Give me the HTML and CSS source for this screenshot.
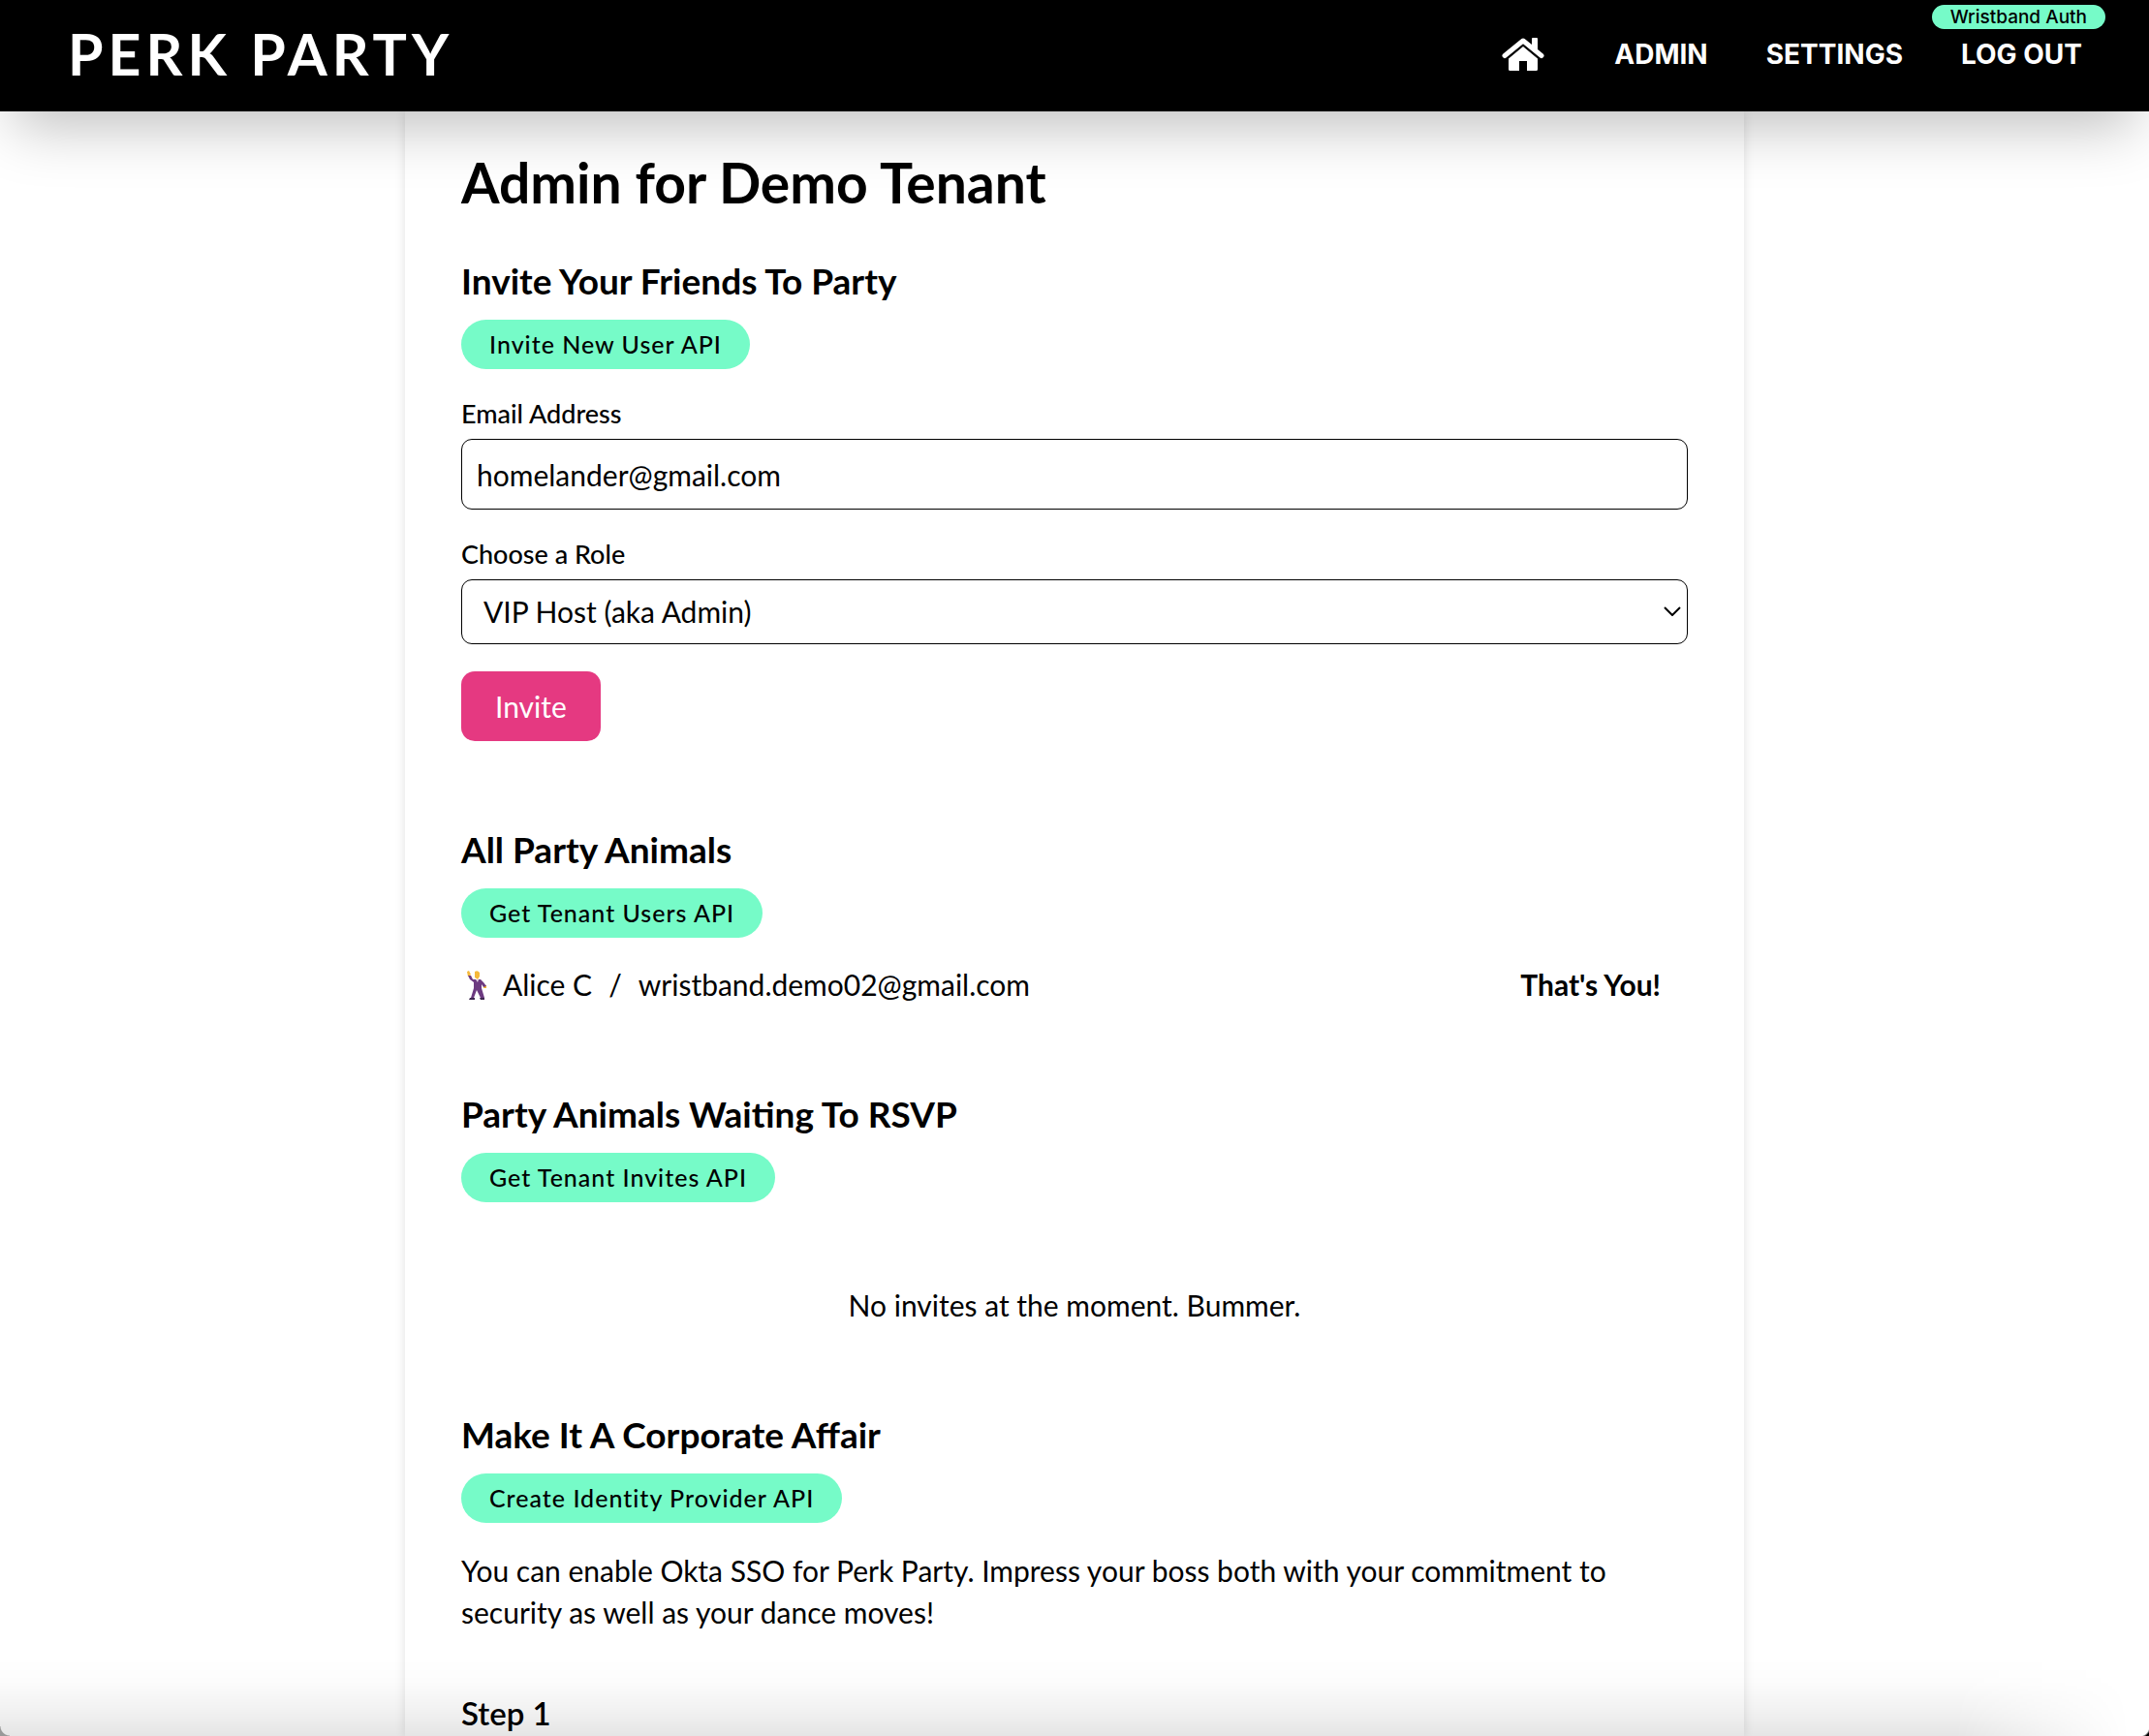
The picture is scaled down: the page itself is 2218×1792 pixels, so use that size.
FILE: index.html
```html
<!DOCTYPE html>
<html lang="en">
<head>
<meta charset="utf-8">
<meta name="viewport" content="width=device-width, initial-scale=1">
<title>Perk Party – Admin</title>
<link rel="stylesheet" href="styles.css">
</head>
<body>
<header class="site-header">
  <a class="brand" href="#">PERK PARTY</a>
  <nav class="nav" aria-label="Main">
    <a class="nav-link" href="#" aria-label="Home">
      <svg class="home-icon" viewBox="0 0 44 34" aria-hidden="true">
        <path class="roof" d="M3 18.500 22 3 41 18.500"/>
        <path d="M31 1q0-1 1-1h4q1 0 1 1v14l-6-5Z"/>
        <path d="M22 9 37 21.500V32.500q0 1.500-1.500 1.500H26V24h-8v10H8.500Q7 34 7 32.500V21.500Z"/>
      </svg>
    </a>
    <a class="nav-link" href="#">ADMIN</a>
    <a class="nav-link" href="#">SETTINGS</a>
    <a class="nav-link" href="#">LOG OUT<span class="auth-badge">Wristband Auth</span></a>
  </nav>
</header>

<main class="card">
  <h1 class="title">Admin for Demo Tenant</h1>

  <section class="section">
    <h2 class="heading">Invite Your Friends To Party</h2>
    <span class="pill">Invite New User API</span>
    <form class="form">
      <div class="field">
        <label class="label" for="email">Email Address</label>
        <input class="input" id="email" type="email" value="homelander@gmail.com">
      </div>
      <div class="field">
        <label class="label" for="role">Choose a Role</label>
        <div class="select-wrap">
          <select class="select" id="role">
            <option>VIP Host (aka Admin)</option>
          </select>
          <svg class="chevron" viewBox="0 0 18 10" aria-hidden="true"><path d="M1 1l8 8 8-8"/></svg>
        </div>
      </div>
      <button class="button" type="button">Invite</button>
    </form>
  </section>

  <section class="section">
    <h2 class="heading">All Party Animals</h2>
    <span class="pill">Get Tenant Users API</span>
    <ul class="users">
      <li class="user">
        <svg class="dancer" viewBox="0 0 20 30" aria-hidden="true">
          <path fill="#f5b93a" d="M0 1 2 0l2 4-3 2zM8 1q3-2 5 1v4l-2 3-3-2zM17 15h3v3h-3z"/>
          <path fill="#6c3a80" d="M1 5h3l2 4h8l3 3 3 4-3 1-2-3v4l3 10h-4l-4-8-3 8H4l3-10V12L3 9z"/>
          <path fill="#3f2850" d="M3 28h5v2H2zM13 28h5v2h-4z"/>
          <path fill="#e6d8e8" d="m9 9 2 3 1-3z"/>
        </svg>
        <span class="user-name">Alice C</span>
        <span class="slash">/</span>
        <span class="user-email">wristband.demo02@gmail.com</span>
        <strong class="you">That's You!</strong>
      </li>
    </ul>
  </section>

  <section class="section">
    <h2 class="heading">Party Animals Waiting To RSVP</h2>
    <span class="pill">Get Tenant Invites API</span>
    <p class="empty">No invites at the moment. Bummer.</p>
  </section>

  <section class="section">
    <h2 class="heading">Make It A Corporate Affair</h2>
    <span class="pill">Create Identity Provider API</span>
    <p class="text">You can enable Okta SSO for Perk Party. Impress your boss both with your commitment to security as well as your dance moves!</p>
    <h3 class="step">Step 1</h3>
  </section>
</main>
<div class="fade" aria-hidden="true"></div>
<div class="corner corner-left" aria-hidden="true"></div>
<div class="corner corner-right" aria-hidden="true"></div>
</body>
</html>
```
FILE: styles.css
```css
* { box-sizing: border-box; }

body {
  margin: 0;
  background: #fff;
  color: #000;
  font-family: Lato, sans-serif;
  font-size: 30px;
  line-height: 43px;
}

h1, h2, h3, p, ul { margin: 0; padding: 0; }

.site-header {
  position: relative;
  z-index: 1;
  display: flex;
  align-items: center;
  justify-content: space-between;
  height: 115px;
  padding: 0 69px 3px 70px;
  background: #000;
  box-shadow: 0 30px 60px -14px rgba(0, 0, 0, 0.25);
}

.brand {
  color: #fff;
  font-size: 59px;
  font-weight: 700;
  line-height: 64px;
  letter-spacing: 5px;
  text-decoration: none;
}

.nav { display: flex; align-items: center; gap: 60px; }

.nav-link {
  position: relative;
  color: #fff;
  font-family: Inter, sans-serif;
  font-size: 28px;
  font-weight: 700;
  line-height: 40px;
  text-decoration: none;
}

.nav-link:first-child { margin-right: 12px; }

.home-icon { display: block; width: 44px; height: 34px; fill: #fff; }

.roof {
  fill: none;
  stroke: #fff;
  stroke-width: 5;
  stroke-linecap: round;
  stroke-linejoin: round;
}

.auth-badge {
  position: absolute;
  right: -24px;
  bottom: 46px;
  padding: 0 19px;
  border-radius: 13px;
  background: #76fbc8;
  color: #000;
  font-size: 19px;
  font-weight: 500;
  line-height: 25px;
  white-space: nowrap;
}

.card {
  max-width: 1382px;
  min-height: calc(100vh - 115px);
  margin: 0 auto;
  padding: 37px 58px 0;
  box-shadow: 0 0 10px rgba(0, 0, 0, 0.12);
}

.title { font-size: 57px; font-weight: 700; line-height: 72px; }

.section { margin-top: 90px; }
.title + .section { margin-top: 44px; }

.heading { margin-bottom: 18px; font-size: 37px; font-weight: 700; line-height: 44px; }

.pill {
  display: block;
  width: fit-content;
  padding: 0 29px;
  border-radius: 26px;
  background: #76fbc8;
  font-size: 25px;
  font-weight: 500;
  line-height: 51px;
  letter-spacing: 1px;
}

.form { margin-top: 28px; }
.field { margin-bottom: 28px; }

.label { display: block; margin-bottom: 8px; font-size: 27px; font-weight: 500; line-height: 36px; }

.input, .select {
  display: block;
  width: 100%;
  border: 1px solid #000;
  border-radius: 11px;
  background: #fff;
  color: #000;
  font: inherit;
}

.input { height: 73px; padding: 0 15px; }

.select { height: 67px; padding: 0 22px; appearance: none; }

.select-wrap { position: relative; }

.chevron {
  position: absolute;
  top: 28px;
  right: 7px;
  width: 18px;
  height: 10px;
  fill: none;
  stroke: #000;
  stroke-width: 2;
  pointer-events: none;
}

.button {
  display: block;
  height: 72px;
  padding: 0 35px;
  border: 0;
  border-radius: 14px;
  background: #e53981;
  color: #fff;
  font: inherit;
}

.users { margin-top: 27px; list-style: none; }

.user { display: flex; align-items: center; padding: 0 28px 0 6px; }

.dancer { width: 20px; height: 30px; margin-right: 17px; }

.slash { margin: 0 17px; }

.you { margin-left: auto; font-weight: 700; }

.empty { margin-top: 85px; text-align: center; }

.text { margin-top: 28px; }

.step { margin-top: 62px; font-size: 33px; font-weight: 600; line-height: 40px; }

/* Soft shade rising from the bottom edge of the window */
.fade {
  position: fixed;
  right: 0;
  bottom: 0;
  left: 0;
  height: 80px;
  background: linear-gradient(to top, rgba(0, 0, 0, 0.1), rgba(0, 0, 0, 0.05) 35%, rgba(0, 0, 0, 0.01) 70%, transparent);
  mask-image: linear-gradient(to left, transparent 20px, #000 200px);
  pointer-events: none;
}

.corner { position: fixed; bottom: 0; width: 10px; height: 10px; }
.corner-left { left: 0; background: radial-gradient(circle at 100% 0, transparent 9px, #999 10px); }
.corner-right { right: 0; background: radial-gradient(circle at 0 0, transparent 10px, #000 12px); }
```
